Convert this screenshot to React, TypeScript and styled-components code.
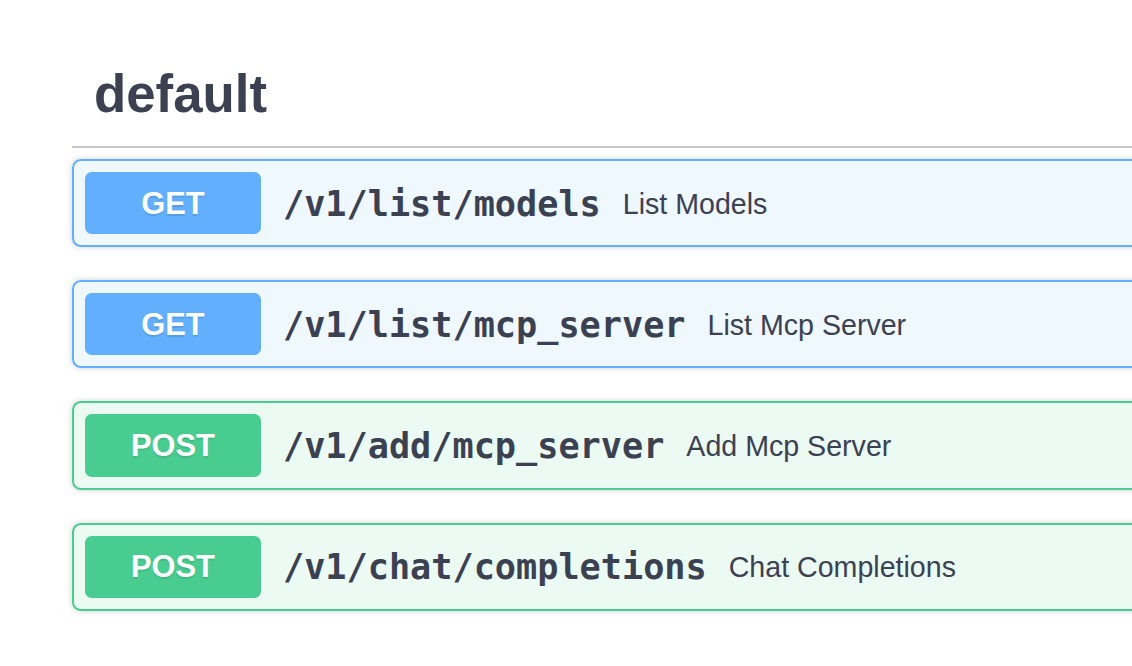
import React from "react";
import styled, { createGlobalStyle } from "styled-components";

const Global = createGlobalStyle`
  html, body { margin: 0; padding: 0; background: #fff; overflow: hidden; }
  body { font-family: "Liberation Sans", Arial, sans-serif; color: #3b4151; }
`;

const Viewport = styled.div`
  width: 1132px;
  overflow: hidden;
`;

const Page = styled.div`
  padding: 41px 0 0 72px;
  width: 1120px;
`;

const TagHeader = styled.h3`
  margin: 0 0 11px;
  padding: 22px 44px 22px 22px;
  border-bottom: 2.2px solid rgba(59, 65, 81, 0.3);
  font-family: "Liberation Sans", Arial, sans-serif;
  font-size: 52.8px;
  line-height: 61px;
  font-weight: 700;
  color: #3b4151;
`;

const theme = {
  get: { main: "#61affe", bg: "rgba(97,175,254,.1)" },
  post: { main: "#49cc90", bg: "rgba(73,204,144,.1)" },
} as const;

type Method = keyof typeof theme;

const Block = styled.div<{ $m: Method }>`
  margin: 0 0 33px;
  border: 2.2px solid ${(p) => theme[p.$m].main};
  background: ${(p) => theme[p.$m].bg};
  border-radius: 8.8px;
  box-shadow: 0 0 6.6px rgba(0, 0, 0, 0.19);
`;

const Summary = styled.div`
  display: flex;
  align-items: center;
  padding: 11px;
`;

const Badge = styled.span<{ $m: Method }>`
  display: flex;
  align-items: center;
  justify-content: center;
  width: 176px;
  height: 62.2px;
  padding-top: 1px;
  box-sizing: border-box;
  border-radius: 6.6px;
  background: ${(p) => theme[p.$m].main};
  color: #fff;
  font-family: "Liberation Sans", Arial, sans-serif;
  font-size: 30.8px;
  font-weight: 700;
  text-shadow: 0 2.2px 0 rgba(0, 0, 0, 0.1);
`;

const Path = styled.span`
  padding: 0 22px;
  font-family: "DejaVu Sans Mono", monospace;
  font-size: 35.2px;
  font-weight: 700;
  color: #3b4151;
`;

const Desc = styled.span`
  padding-top: 2px;
  font-family: "Liberation Sans", Arial, sans-serif;
  font-size: 28.6px;
  color: #3b4151;
`;

const ops: { m: Method; path: string; desc: string }[] = [
  { m: "get", path: "/v1/list/models", desc: "List Models" },
  { m: "get", path: "/v1/list/mcp_server", desc: "List Mcp Server" },
  { m: "post", path: "/v1/add/mcp_server", desc: "Add Mcp Server" },
  { m: "post", path: "/v1/chat/completions", desc: "Chat Completions" },
];

export default function App() {
  return (
    <>
      <Global />
      <Viewport>
        <Page>
          <TagHeader>default</TagHeader>
          {ops.map((o) => (
            <Block key={o.path} $m={o.m}>
              <Summary>
                <Badge $m={o.m}>{o.m.toUpperCase()}</Badge>
                <Path>{o.path}</Path>
                <Desc>{o.desc}</Desc>
              </Summary>
            </Block>
          ))}
        </Page>
      </Viewport>
    </>
  );
}
